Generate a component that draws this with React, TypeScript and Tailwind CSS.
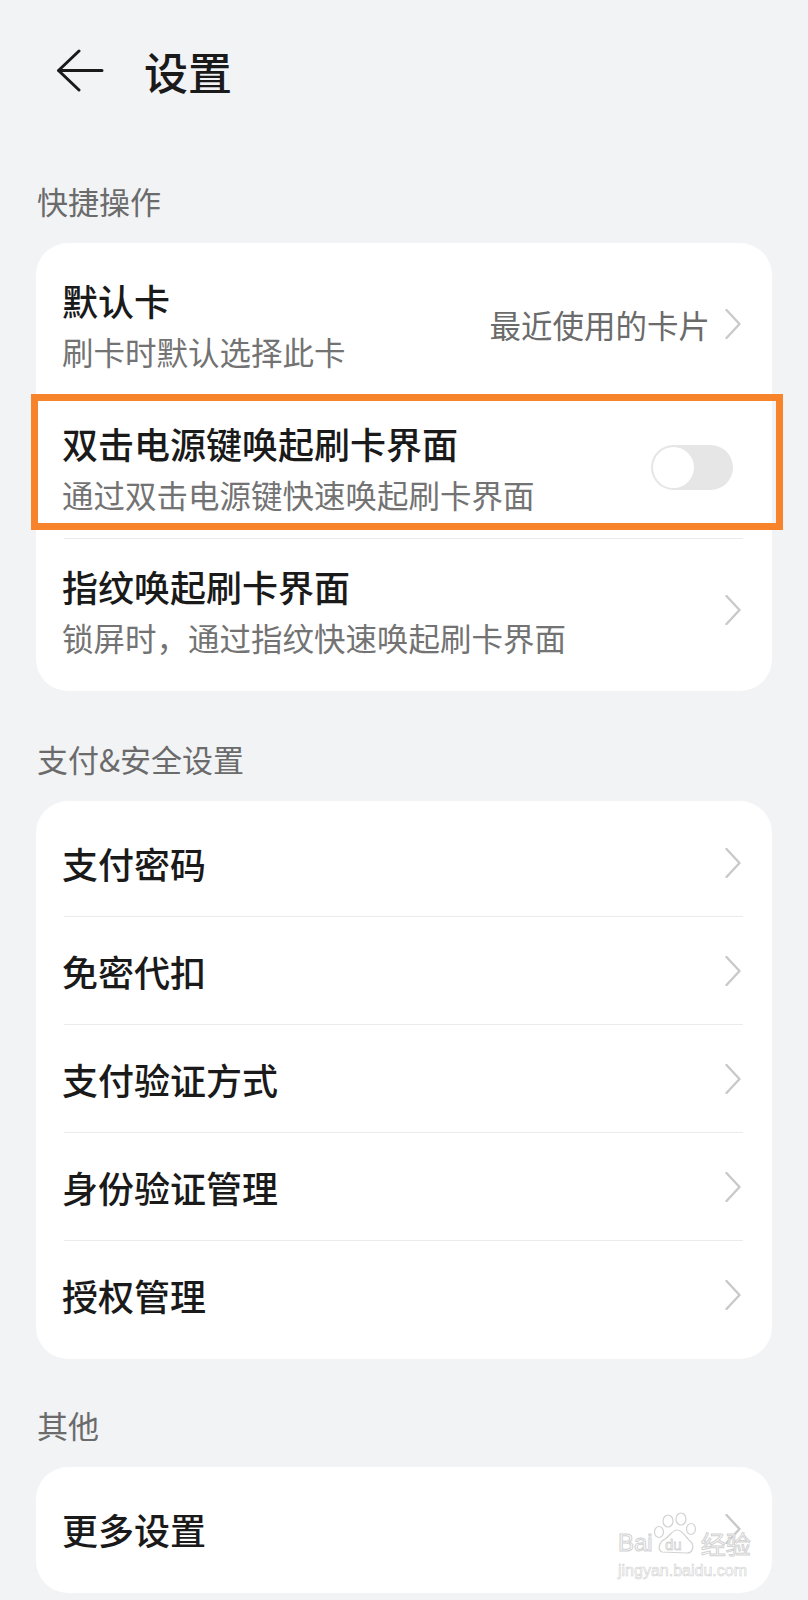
import React from "react";

type Item = {
  title: string;
  subtitle?: string;
  value?: string;
  toggle?: boolean;
};

const quickItems: Item[] = [
  { title: "默认卡", subtitle: "刷卡时默认选择此卡", value: "最近使用的卡片" },
  { title: "双击电源键唤起刷卡界面", subtitle: "通过双击电源键快速唤起刷卡界面", toggle: true },
  { title: "指纹唤起刷卡界面", subtitle: "锁屏时，通过指纹快速唤起刷卡界面" },
];

const payItems: Item[] = [
  { title: "支付密码" },
  { title: "免密代扣" },
  { title: "支付验证方式" },
  { title: "身份验证管理" },
  { title: "授权管理" },
];

const otherItems: Item[] = [{ title: "更多设置" }];

const Chevron = () => (
  <svg width="16" height="30" viewBox="0 0 16 30" fill="none" className="shrink-0">
    <path
      d="M1.5 1 L14.5 15 L1.5 29"
      stroke="#c9c9c9"
      strokeWidth="2.4"
      strokeLinecap="round"
      strokeLinejoin="round"
    />
  </svg>
);

const Toggle = () => (
  <div className="relative w-[82px] h-[45px] rounded-full bg-[#e6e6e6] shrink-0 mr-[8px]">
    <div className="absolute left-[2px] top-[2px] w-[41px] h-[41px] rounded-full bg-white" />
  </div>
);

const Row: React.FC<{ item: Item; tall: boolean; last: boolean }> = ({ item, tall, last }) => (
  <div>
    <div
      className={
        tall
          ? "flex items-center h-[142px] pl-[26px] pr-[31px]"
          : "flex items-center h-[107px] pl-[26px] pr-[31px]"
      }
    >
      <div className="flex-1 min-w-0 flex flex-col">
        <div className="text-[36px] leading-[46px] font-medium text-[#1a1a1a]">{item.title}</div>
        {item.subtitle && (
          <div className="mt-2 text-[31.5px] leading-[40px] text-[#737373]">{item.subtitle}</div>
        )}
      </div>
      {item.value && (
        <div className="text-[31.5px] leading-[40px] text-[#6b6b6b] mr-[15px]">{item.value}</div>
      )}
      {item.toggle ? <Toggle /> : <Chevron />}
    </div>
    {!last && <div className="ml-[28px] mr-[29px] h-px bg-[#ebebeb]" />}
  </div>
);

const Section: React.FC<{
  label: string;
  items: Item[];
  spacing: string;
  tall?: boolean;
  highlight?: boolean;
}> = ({ label, items, spacing, tall = false, highlight = false }) => (
  <section className={spacing}>
    <div className="px-[37px] h-[40px] text-[31px] leading-[40px] text-[#6b6b6b]">{label}</div>
    <div
      className={
        tall
          ? "relative mx-9 mt-[22px] rounded-[32px] bg-white py-[10px]"
          : "relative mx-9 mt-[22px] rounded-[32px] bg-white pt-2 pb-[11px]"
      }
    >
      {items.map((it, i) => (
        <Row key={it.title} item={it} tall={tall} last={i === items.length - 1} />
      ))}
      {highlight && (
        <div className="absolute top-[151px] left-[-5px] right-[-11px] h-[136px] border-[7px] border-[#f7842b]" />
      )}
    </div>
  </section>
);

// faint "Baidu 经验" stamp in the corner of the screenshot
const Watermark = () => (
  <div className="absolute left-[618px] top-[1512px] flex flex-col items-start pointer-events-none font-['Liberation_Sans',sans-serif] text-white [-webkit-text-stroke:1px_#d2d2d2]">
    <div className="flex items-end h-[44px]">
      <span className="text-[24px] leading-[24px] mb-[1px]">Bai</span>
      <svg width="48" height="44" viewBox="0 0 48 44" fill="none" stroke="#d2d2d2" strokeWidth="1.2">
        <ellipse cx="15" cy="9" rx="5" ry="6" />
        <ellipse cx="28" cy="7" rx="5" ry="6" />
        <ellipse cx="6" cy="20" rx="4.5" ry="5.5" />
        <ellipse cx="38" cy="17" rx="4.5" ry="5.5" />
        <path d="M9 40 C 4 38 6 30 12 27 C 17 24 19 18 24 18 C 30 18 32 25 37 29 C 42 33 40 41 34 41 Z" fill="white" />
        <text x="12" y="38" fontSize="15" fontFamily="Liberation Sans, sans-serif" fill="white" stroke="#d2d2d2" strokeWidth="0.8">
          du
        </text>
      </svg>
      <span className="text-[25px] leading-[25px] font-['Noto_Sans_CJK_SC',sans-serif]">经验</span>
    </div>
    <div className="mt-[6px] text-[16px] leading-[18px] [-webkit-text-stroke:0.6px_#d2d2d2]">jingyan.baidu.com</div>
  </div>
);

export default function App() {
  return (
    <div className="relative min-h-screen bg-[#f1f3f5] font-['Noto_Sans_CJK_SC','Noto_Sans',sans-serif] overflow-hidden">
      <header className="flex items-center h-[142px] pl-[56px]">
        <svg width="48" height="44" viewBox="0 0 48 44" fill="none">
          <path
            d="M46 21.5 H2.5 M23 2 L2.5 21.5 L23 41"
            stroke="#1a1a1a"
            strokeWidth="3"
            strokeLinecap="round"
            strokeLinejoin="round"
          />
        </svg>
        <h1 className="ml-[40px] text-[44px] font-medium text-[#1a1a1a]">设置</h1>
      </header>

      <Section label="快捷操作" items={quickItems} spacing="mt-[39px]" tall highlight />
      <Section label="支付&安全设置" items={payItems} spacing="mt-[48px]" />
      <Section label="其他" items={otherItems} spacing="mt-[46px]" />

      <Watermark />
    </div>
  );
}
